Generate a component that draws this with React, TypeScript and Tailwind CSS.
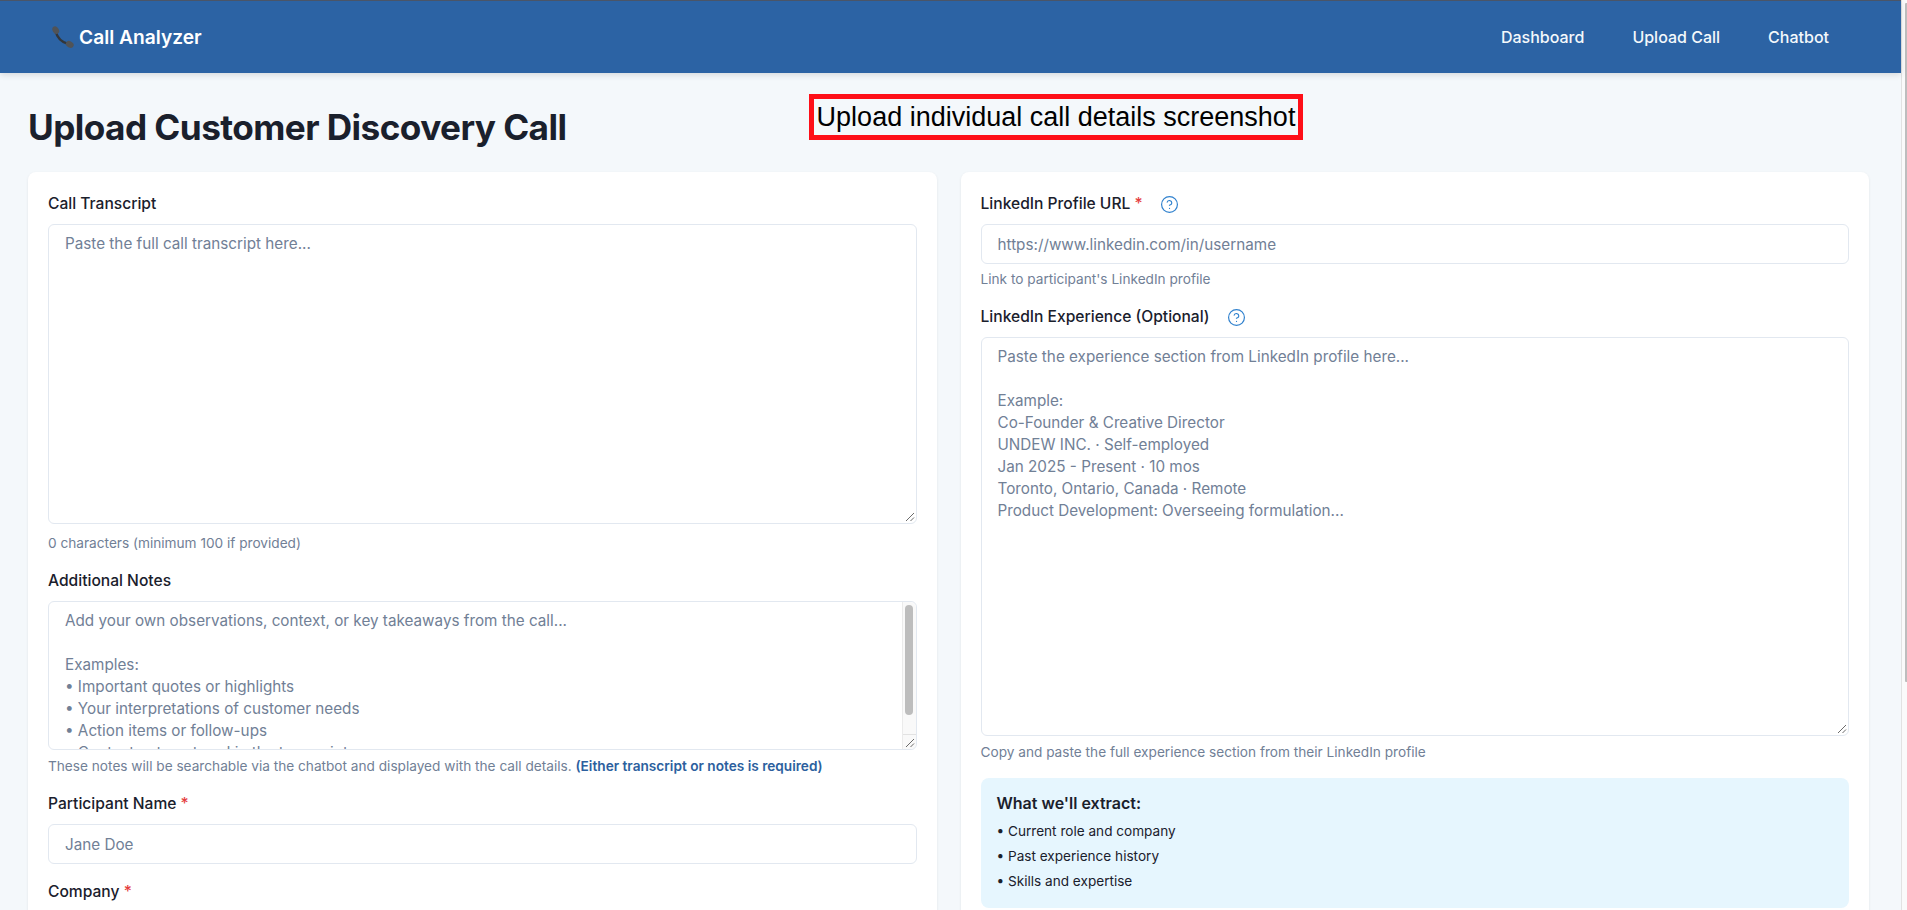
import { CircleHelp } from 'lucide-react'
import type { ReactNode } from 'react'

const notesPlaceholder = `Add your own observations, context, or key takeaways from the call...

Examples:
• Important quotes or highlights
• Your interpretations of customer needs
• Action items or follow-ups
• Context not captured in the transcript`

const experiencePlaceholder = `Paste the experience section from LinkedIn profile here...

Example:
Co-Founder & Creative Director
UNDEW INC. · Self-employed
Jan 2025 - Present · 10 mos
Toronto, Ontario, Canada · Remote
Product Development: Overseeing formulation...`

const fieldClass =
  'block w-full rounded-[6px] border border-[#e2e8f0] bg-white px-4 py-2 text-[15.25px] leading-[22px] text-[#1a202c] placeholder:text-[#718096] placeholder:opacity-100 outline-none'

function PhoneIcon() {
  return (
    <svg width="22" height="22" viewBox="0 0 22 22" className="shrink-0">
      <path d="M3.8 5.5C5 11.5 10 16.2 16.5 18.2" fill="none" stroke="#33363a" strokeWidth="2.4" strokeLinecap="round" />
      <ellipse cx="3.7" cy="4.1" rx="3.1" ry="4" transform="rotate(-28 3.7 4.1)" fill="#505357" />
      <ellipse cx="17.8" cy="18.4" rx="3.1" ry="4.1" transform="rotate(-62 17.8 18.4)" fill="#505357" />
    </svg>
  )
}

function Label({ children, required, help }: { children: ReactNode; required?: boolean; help?: boolean }) {
  return (
    <div className="mb-2 flex h-6 items-center text-[15.6px] font-[450] text-[#1a202c]">
      <span>
        {children}
        {required && <span className="text-[#e53e3e]"> *</span>}
      </span>
      {help && <CircleHelp size={19} strokeWidth={1.5} className="ml-[17px] text-[#3182ce]" />}
    </div>
  )
}

function Hint({ children, className = 'mt-[6px]' }: { children: ReactNode; className?: string }) {
  return <p className={`h-5 text-[13.65px] leading-5 text-[#718096] ${className}`}>{children}</p>
}

function ResizeGrip() {
  return (
    <svg width="10" height="10" viewBox="0 0 10 10" className="pointer-events-none absolute bottom-[2px] right-[2px]">
      <path d="M1 9 9 1M5.5 9 9 5.5" stroke="#6b6b6b" strokeWidth="1" fill="none" />
    </svg>
  )
}

function TextBox({ placeholder, height, border }: { placeholder: string; height: string; border?: string }) {
  return (
    <div className={`relative ${height}`}>
      <textarea
        readOnly
        placeholder={placeholder}
        className={`${fieldClass} h-full resize-none overflow-hidden ${border ?? ''}`}
      />
      <ResizeGrip />
    </div>
  )
}

export default function App() {
  return (
    <div className="flex h-[910px] w-full overflow-hidden bg-[#f4f8fb] font-['Inter',sans-serif]">
      <div className="relative min-w-0 flex-1">
        <nav className="flex h-[73px] items-center justify-between border-t border-t-[#4a5568] bg-[#2c63a4] pl-[52px] pr-[72px] shadow-[0_2px_6px_rgba(0,0,0,0.12)]">
          <div className="flex items-center gap-[5px] text-[19.2px] font-semibold text-white">
            <PhoneIcon />
            <span>Call Analyzer</span>
          </div>
          <div className="flex items-center gap-12 text-[16px] font-medium text-[#f4f8fb]">
            <span>Dashboard</span>
            <span>Upload Call</span>
            <span>Chatbot</span>
          </div>
        </nav>

        <div className="absolute left-[809px] top-[94px] flex h-[46px] w-[494px] items-center justify-center whitespace-nowrap border-[5px] border-[#fe0f18] font-['Liberation_Sans',sans-serif] text-[27px] text-black">
          Upload individual call details screenshot
        </div>

        <main className="pl-[28px] pr-[32px]">
          <h1 className="flex h-[99px] items-center pt-[9px] text-[35.2px] font-bold tracking-[-0.57px] text-[#1a202c]">
            Upload Customer Discovery Call
          </h1>
          <div className="grid grid-cols-2 gap-6">
            <section className="h-[800px] rounded-[8px] bg-white px-5 pt-5 shadow-[0_1px_3px_rgba(0,0,0,0.08)]">
              <Label>Call Transcript</Label>
              <TextBox placeholder="Paste the full call transcript here..." height="h-[300px]" />
              <Hint className="mt-[9px]">0 characters (minimum 100 if provided)</Hint>

              <div className="mt-4">
                <Label>Additional Notes</Label>
                <div className="relative h-[149px]">
                  <textarea
                    readOnly
                    placeholder={notesPlaceholder}
                    className={`${fieldClass} h-full resize-none overflow-hidden`}
                  />
                  <div className="absolute bottom-[1px] right-[1px] top-[1px] flex w-[14px] flex-col rounded-r-[6px] border-l border-l-[#ebebeb] bg-[#f9f9f9]">
                    <div className="mx-auto mt-[3px] h-[110px] w-[8px] rounded-full bg-[#bdbdbd]" />
                    <div className="mt-auto h-[15px] border-t border-t-[#e2e2e2]" />
                  </div>
                  <ResizeGrip />
                </div>
                <Hint>
                  These notes will be searchable via the chatbot and displayed with the call details.{' '}
                  <span className="font-semibold text-[#2c5f9e]">(Either transcript or notes is required)</span>
                </Hint>
              </div>

              <div className="mt-4">
                <Label required>Participant Name</Label>
                <input readOnly placeholder="Jane Doe" className={`${fieldClass} h-10`} />
              </div>

              <div className="mt-4">
                <Label required>Company</Label>
                <input readOnly className={`${fieldClass} h-10`} />
              </div>
            </section>

            <section className="h-[800px] rounded-[8px] bg-white px-5 pt-5 shadow-[0_1px_3px_rgba(0,0,0,0.08)]">
              <Label required help>
                LinkedIn Profile URL
              </Label>
              <input readOnly placeholder="https://www.linkedin.com/in/username" className={`${fieldClass} h-10`} />
              <Hint className="mt-[5px]">Link to participant's LinkedIn profile</Hint>

              <div className="mt-4">
                <Label help>LinkedIn Experience (Optional)</Label>
                <TextBox placeholder={experiencePlaceholder} height="h-[399px]" border="border-[#cbd5e0]" />
                <Hint>Copy and paste the full experience section from their LinkedIn profile</Hint>
              </div>

              <div className="mt-4 h-[130px] rounded-[8px] bg-[#e6f6fe] px-4 pt-[14px]">
                <h3 className="mb-[5px] text-[16px] font-semibold leading-[22px] text-[#1a202c]">What we'll extract:</h3>
                <ul className="text-[13.6px] leading-[25px] text-[#1a202c]">
                  <li>• Current role and company</li>
                  <li>• Past experience history</li>
                  <li>• Skills and expertise</li>
                </ul>
              </div>
            </section>
          </div>
        </main>
      </div>

      <div className="w-[6px] shrink-0 border-l border-l-[#e2e2e2] bg-[#fafafa] pt-[3px]">
        <div className="ml-[3px] h-[679px] w-[2px] rounded-l-[1px] bg-[#bdbdbd]" />
      </div>
    </div>
  )
}
